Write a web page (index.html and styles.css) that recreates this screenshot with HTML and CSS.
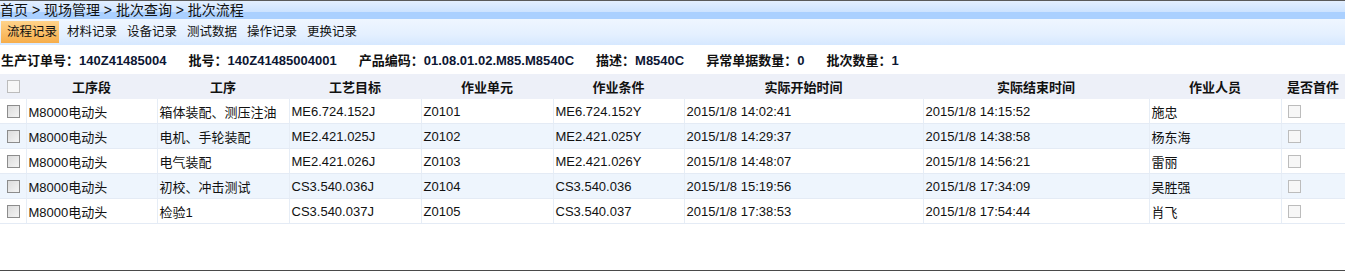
FILE: index.html
```html
<!DOCTYPE html>
<html lang="zh">
<head>
    <meta charset="UTF-8">
    <title>批次流程</title>
    <link rel="stylesheet" href="styles.css">
</head>
<body>
    <div class="page">
        <div class="crumb">首页 &gt; 现场管理 &gt; 批次查询 &gt; 批次流程</div>
        <div class="tabs">
            <span class="tab active">流程记录</span>
            <span class="tab">材料记录</span>
            <span class="tab">设备记录</span>
            <span class="tab">测试数据</span>
            <span class="tab">操作记录</span>
            <span class="tab">更换记录</span>
        </div>
        <div class="info">
            <span class="item">生产订单号：<b>140Z41485004</b></span>
            <span class="item">批号：<b>140Z41485004001</b></span>
            <span class="item">产品编码：<b>01.08.01.02.M85.M8540C</b></span>
            <span class="item">描述：<b>M8540C</b></span>
            <span class="item">异常单据数量：<b>0</b></span>
            <span class="item">批次数量：<b>1</b></span>
        </div>
        <table class="grid">
            <colgroup>
                <col style="width:26px"><col style="width:131px"><col style="width:132px"><col style="width:132px"><col style="width:132px">
                <col style="width:131px"><col style="width:239px"><col style="width:226px"><col style="width:132px"><col style="width:64px">
            </colgroup>
            <thead>
                <tr>
                    <th class="chk"><span class="box light"></span></th>
                    <th>工序段</th><th>工序</th><th>工艺目标</th><th>作业单元</th><th>作业条件</th>
                    <th>实际开始时间</th><th>实际结束时间</th><th>作业人员</th><th>是否首件</th>
                </tr>
            </thead>
            <tbody>
                <tr>
                    <td class="chk"><span class="box"></span></td>
                    <td>M8000电动头</td><td>箱体装配、测压注油</td><td>ME6.724.152J</td><td>Z0101</td><td>ME6.724.152Y</td>
                    <td>2015/1/8 14:02:41</td><td>2015/1/8 14:15:52</td><td>施忠</td><td class="first"><span class="box light"></span></td>
                </tr>
                <tr>
                    <td class="chk"><span class="box"></span></td>
                    <td>M8000电动头</td><td>电机、手轮装配</td><td>ME2.421.025J</td><td>Z0102</td><td>ME2.421.025Y</td>
                    <td>2015/1/8 14:29:37</td><td>2015/1/8 14:38:58</td><td>杨东海</td><td class="first"><span class="box light"></span></td>
                </tr>
                <tr>
                    <td class="chk"><span class="box"></span></td>
                    <td>M8000电动头</td><td>电气装配</td><td>ME2.421.026J</td><td>Z0103</td><td>ME2.421.026Y</td>
                    <td>2015/1/8 14:48:07</td><td>2015/1/8 14:56:21</td><td>雷丽</td><td class="first"><span class="box light"></span></td>
                </tr>
                <tr>
                    <td class="chk"><span class="box"></span></td>
                    <td>M8000电动头</td><td>初校、冲击测试</td><td>CS3.540.036J</td><td>Z0104</td><td>CS3.540.036</td>
                    <td>2015/1/8 15:19:56</td><td>2015/1/8 17:34:09</td><td>吴胜强</td><td class="first"><span class="box light"></span></td>
                </tr>
                <tr>
                    <td class="chk"><span class="box"></span></td>
                    <td>M8000电动头</td><td>检验1</td><td>CS3.540.037J</td><td>Z0105</td><td>CS3.540.037</td>
                    <td>2015/1/8 17:38:53</td><td>2015/1/8 17:54:44</td><td>肖飞</td><td class="first"><span class="box light"></span></td>
                </tr>
            </tbody>
        </table>
    </div>
</body>
</html>
```
FILE: styles.css
```css
body {
    margin: 0;
    padding: 0;
    font-family: "Liberation Sans", "Noto Sans CJK SC", sans-serif;
    color: #111;
    background: #fff;
}
.page {
    height: 269px;
    border-top: 1px solid #5a5a5a;
    border-bottom: 1px solid #4a4a4a;
    overflow: hidden;
}
.crumb {
    height: 18px;
    line-height: 18px;
    font-size: 14px;
    color: #111;
    background: linear-gradient(#e3efff, #cde3ff 60%, #aad0ff 61%, #aad0ff);
    white-space: nowrap;
}
.tabs {
    height: 26px;
    display: flex;
    align-items: center;
    gap: 2px;
    padding-left: 1px;
    background: linear-gradient(#eff6ff, #e4f0ff 60%, #d6e8ff);
}
.tab {
    height: 22px;
    line-height: 22px;
    padding: 0 2px 0 6px;
    font-size: 12.5px;
    white-space: nowrap;
}
.tab.active {
    background: linear-gradient(#ffd38a, #f6ad4a);
}
.info {
    height: 29px;
    display: flex;
    align-items: center;
    padding-left: 1px;
    font-size: 13px;
    font-weight: bold;
    white-space: nowrap;
}
.info .item {
    margin-right: 22px;
}
.info b {
    color: #0d1633;
}
.grid {
    width: 1345px;
    table-layout: fixed;
    border-collapse: collapse;
    font-size: 13px;
}
.grid th {
    height: 25px;
    padding: 0;
    background: #edf0f8;
    font-weight: bold;
    text-align: center;
    white-space: nowrap;
}
.grid td {
    height: 24px;
    padding: 0 0 0 2px;
    border-right: 1px solid #e6edf6;
    border-bottom: 1px solid #e4ebf5;
    white-space: nowrap;
    overflow: hidden;
}
.grid tbody tr:nth-child(even) td {
    background: #eef5fd;
}
.grid .chk {
    padding: 0 0 0 7px;
    text-align: left;
}
.grid .first {
    padding-left: 6px;
    border-right: none;
}
.box {
    display: block;
    width: 11px;
    height: 11px;
    border: 1px solid #8c8c8c;
    background: linear-gradient(135deg, #dcdcdc, #f4f4f4);
}
.box.light {
    border-color: #bcbcbc;
    background: #f7f7f7;
}
```
